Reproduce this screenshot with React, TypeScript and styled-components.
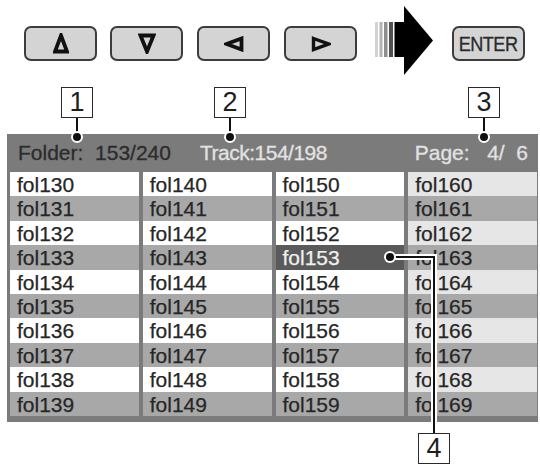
import React from "react";
import styled, { createGlobalStyle } from "styled-components";

const GlobalStyle = createGlobalStyle`
  body {
    margin: 0;
    background: #fff;
    font-family: "Liberation Sans", Arial, sans-serif;
  }
`;

const Screen = styled.div`
  position: relative;
  width: 540px;
  height: 467px;
  overflow: hidden;
  background: #fff;
`;

const Toolbar = styled.div`
  display: flex;
  align-items: flex-start;
  height: 35px;
  padding: 26px 0 0 24px;
`;

const KeyButton = styled.div<{ $gap?: number }>`
  box-sizing: border-box;
  width: 73px;
  height: 35px;
  margin-left: ${({ $gap }) => $gap ?? 0}px;
  display: flex;
  align-items: center;
  justify-content: center;
  background: #d4d4d4;
  border: 2.5px solid #3c3c3c;
  border-radius: 7px;
  color: #2a2a2a;
`;

const EnterLabel = styled.span`
  display: inline-block;
  font-size: 21px;
  letter-spacing: -0.6px;
  line-height: 1;
  transform: scaleX(0.86);
  -webkit-text-stroke: 0.3px #2a2a2a;
`;

const BigArrow = styled.svg`
  flex: none;
  margin: -20px 19px 0 18px;
`;

const Panel = styled.div`
  width: 531px;
  margin: 73px 0 0 7px;
  background: #7b7b7b;
`;

const Header = styled.div`
  display: grid;
  grid-template-columns: 182px 1fr auto;
  align-items: center;
  height: 38px;
  padding: 0 10px 0 11px;
  font-size: 21px;
  white-space: pre;
`;

const HeaderText = styled.span<{ $dim?: boolean; $tight?: boolean }>`
  color: ${({ $dim }) => ($dim ? "#2c2c2c" : "#e2e2e2")};
  letter-spacing: ${({ $tight }) => ($tight ? "-0.5px" : "0")};
  -webkit-text-stroke: 0.3px ${({ $dim }) => ($dim ? "#2c2c2c" : "#e2e2e2")};
`;

const FolderGrid = styled.div`
  display: grid;
  grid-auto-flow: column;
  grid-template-columns: repeat(4, 1fr);
  grid-template-rows: repeat(10, 24.4px);
  column-gap: 4px;
  padding: 0 1px 6px 3px;
`;

type Tone = "light" | "dark" | "pale" | "active";

const toneBg: Record<Tone, string> = {
  light: "#ffffff",
  dark: "#a8a8a8",
  pale: "#e6e6e6",
  active: "#5a5a5a",
};

const Cell = styled.div<{ $tone: Tone }>`
  padding: 1px 0 0 7px;
  font-size: 21px;
  line-height: 23.4px;
  background: ${({ $tone }) => toneBg[$tone]};
  color: ${({ $tone }) => ($tone === "active" ? "#f0f0f0" : "#262626")};
  -webkit-text-stroke: 0.25px
    ${({ $tone }) => ($tone === "active" ? "#f0f0f0" : "#262626")};
`;

const Callout = styled.div<{ $x: number; $y: number }>`
  position: absolute;
  left: ${({ $x }) => $x}px;
  top: ${({ $y }) => $y}px;
  display: flex;
  flex-direction: column;
  align-items: center;
`;

const NumberBox = styled.div`
  box-sizing: border-box;
  width: 32px;
  height: 31px;
  display: flex;
  align-items: center;
  justify-content: center;
  background: #fff;
  border: 1.5px solid #2a2a2a;
  font-size: 27px;
  color: #1e1e1e;
  line-height: 1;
`;

const Stem = styled.div<{ $len: number }>`
  width: 2px;
  height: ${({ $len }) => $len}px;
  background: #111;
`;

const Dot = styled.div`
  width: 8px;
  height: 8px;
  margin-top: -2px;
  border-radius: 50%;
  background: #111;
  border: 2px solid #fff;
`;

const LeaderLayer = styled.svg`
  position: absolute;
  left: 0;
  top: 0;
  pointer-events: none;
`;

const UpIcon = () => (
  <svg width="16" height="21" viewBox="0 0 16 21">
    <polygon points="8,2.5 14,18.5 2,18.5" fill="none" stroke="#111" strokeWidth="3.8" />
  </svg>
);

const DownIcon = () => (
  <svg width="18" height="21" viewBox="0 0 18 21">
    <polygon points="2.5,2.5 15.5,2.5 9,18.5" fill="none" stroke="#111" strokeWidth="3.8" />
  </svg>
);

const LeftIcon = () => (
  <svg width="20" height="16" viewBox="0 0 20 16">
    <polygon points="2.5,8 17.5,2.5 17.5,13.5" fill="none" stroke="#111" strokeWidth="3.8" />
  </svg>
);

const RightIcon = () => (
  <svg width="20" height="16" viewBox="0 0 20 16">
    <polygon points="2.5,2.5 17.5,8 2.5,13.5" fill="none" stroke="#111" strokeWidth="3.4" />
  </svg>
);

const columns = [130, 140, 150, 160];
const activeFolder = 153;

function toneFor(folder: number, col: number, row: number): Tone {
  if (folder === activeFolder) return "active";
  if (row % 2 === 1) return "dark";
  return col === 3 ? "pale" : "light";
}

export default function App() {
  return (
    <Screen>
      <GlobalStyle />
      <Toolbar>
        <KeyButton>
          <UpIcon />
        </KeyButton>
        <KeyButton $gap={13}>
          <DownIcon />
        </KeyButton>
        <KeyButton $gap={14}>
          <LeftIcon />
        </KeyButton>
        <KeyButton $gap={14}>
          <RightIcon />
        </KeyButton>
        <BigArrow width="58" height="70" viewBox="0 0 58 70">
          <rect x="0" y="16" width="3" height="35" fill="#d2d2d2" />
          <rect x="4.5" y="16" width="3" height="35" fill="#b4b4b4" />
          <rect x="9" y="16" width="3.5" height="35" fill="#8e8e8e" />
          <rect x="14" y="16" width="4" height="35" fill="#505050" />
          <rect x="19.5" y="16" width="10" height="35" fill="#000" />
          <polygon points="29,0 58,34.5 29,69" fill="#000" />
        </BigArrow>
        <KeyButton>
          <EnterLabel>ENTER</EnterLabel>
        </KeyButton>
      </Toolbar>

      <Panel>
        <Header>
          <HeaderText $dim>{"Folder:  153/240"}</HeaderText>
          <HeaderText $tight>Track:154/198</HeaderText>
          <HeaderText>{"Page:   4/  6"}</HeaderText>
        </Header>
        <FolderGrid>
          {columns.map((start, col) =>
            Array.from({ length: 10 }, (_, row) => {
              const folder = start + row;
              return (
                <Cell key={folder} $tone={toneFor(folder, col, row)}>
                  fol{folder}
                </Cell>
              );
            })
          )}
        </FolderGrid>
      </Panel>

      <LeaderLayer width="540" height="467" viewBox="0 0 540 467">
        <polyline points="390,257 434,257 434,434" fill="none" stroke="#fff" strokeWidth="6" />
        <polyline points="390,257 434,257 434,434" fill="none" stroke="#111" strokeWidth="2" />
        <circle cx="390" cy="257" r="6" fill="#fff" />
        <circle cx="390" cy="257" r="4" fill="#111" />
      </LeaderLayer>

      <Callout $x={61} $y={87}>
        <NumberBox>1</NumberBox>
        <Stem $len={15} />
        <Dot />
      </Callout>
      <Callout $x={214} $y={87}>
        <NumberBox>2</NumberBox>
        <Stem $len={15} />
        <Dot />
      </Callout>
      <Callout $x={468} $y={87}>
        <NumberBox>3</NumberBox>
        <Stem $len={15} />
        <Dot />
      </Callout>
      <Callout $x={418} $y={433}>
        <NumberBox>4</NumberBox>
      </Callout>
    </Screen>
  );
}
